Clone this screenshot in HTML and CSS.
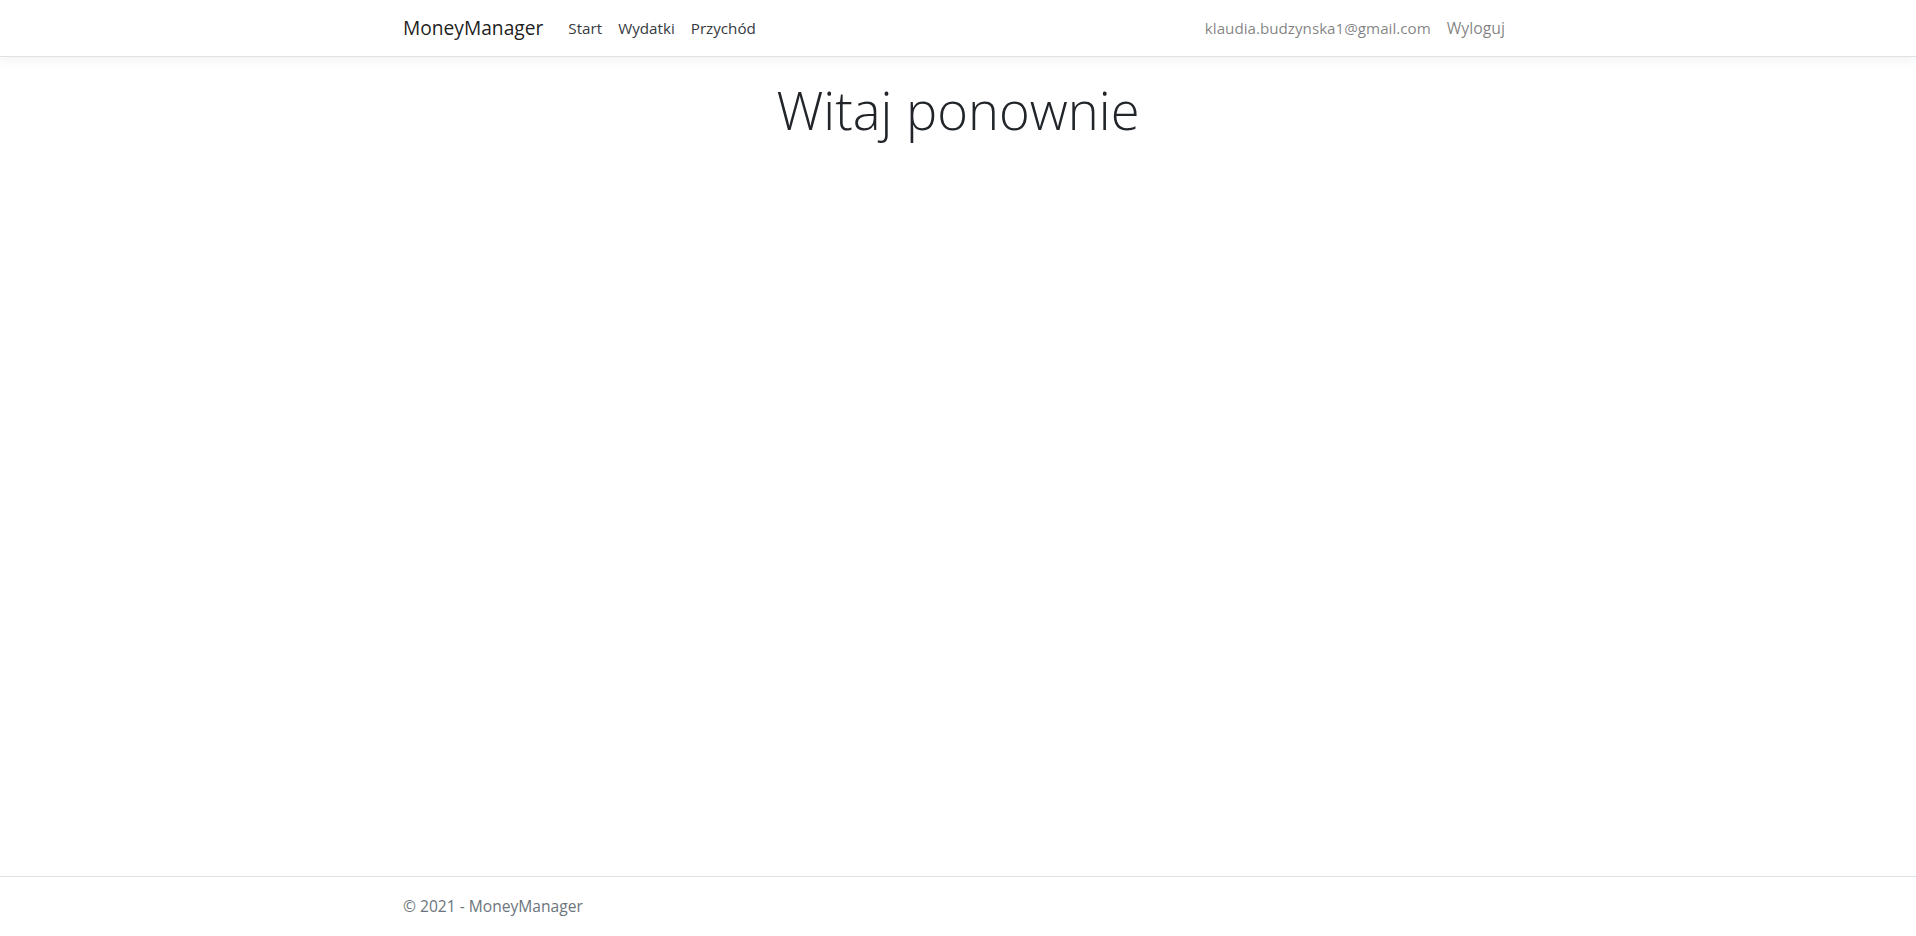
FILE: index.html
```html
<!DOCTYPE html>
<html lang="pl">
<head>
<meta charset="utf-8">
<title>MoneyManager</title>
<link rel="stylesheet" href="styles.css">
</head>
<body>
<header class="navbar">
  <div class="container nav-inner">
    <a class="brand" href="#">MoneyManager</a>
    <ul class="nav-main">
      <li><a class="nav-link dark" href="#">Start</a></li>
      <li><a class="nav-link dark" href="#">Wydatki</a></li>
      <li><a class="nav-link dark" href="#">Przychód</a></li>
    </ul>
    <ul class="nav-user">
      <li><a class="nav-link muted" href="#">klaudia.budzynska1@gmail.com</a></li>
      <li><a class="nav-link muted logout" href="#">Wyloguj</a></li>
    </ul>
  </div>
</header>
<main class="container main">
  <h1 class="display">Witaj ponownie</h1>
</main>
<footer class="footer">
  <div class="container">© 2021 - MoneyManager</div>
</footer>
</body>
</html>
```
FILE: styles.css
```css
* { box-sizing: border-box; }
html, body { margin: 0; padding: 0; }
body {
  font-family: "Open Sans", "Noto Sans", "Liberation Sans", sans-serif;
  font-size: 16px;
  line-height: 1.5;
  color: #212529;
  background: #fff;
  min-height: 100vh;
  display: flex;
  flex-direction: column;
}
a { text-decoration: none; }
.container {
  width: 1140px;
  margin: 0 auto;
  padding: 0 15px;
}
.navbar {
  background: #fff;
  border-bottom: 1px solid #dee2e6;
  box-shadow: 0 4px 12px rgba(0,0,0,.05);
  padding: 8px 0;
  margin-bottom: 16px;
}
.nav-inner {
  display: flex;
  align-items: center;
  height: 40px;
}
.brand {
  font-size: 19.2px;
  line-height: 30px;
  padding: 5px 0;
  margin-right: 17px;
  color: rgba(0,0,0,.9);
}
.nav-main, .nav-user {
  list-style: none;
  margin: 0;
  padding: 0;
  display: flex;
}
.nav-main { flex: 1; }
.nav-link {
  display: block;
  padding: 8px 8px;
  font-size: 15.2px;
  line-height: 24px;
}
.nav-user .nav-link { font-size: 15.2px; }
.nav-user .logout { font-size: 15.8px; }
.dark { color: #343a40; }
.muted { color: rgba(0,0,0,.5); }
.main {
  flex: 1;
  padding-bottom: 16px;
}
.display {
  margin: 5px 0 0;
  text-align: center;
  font-size: 52.5px;
  font-weight: 300;
  line-height: 1.2;
  color: #212529;
}
.footer {
  border-top: 1px solid #dee2e6;
  line-height: 59px;
  color: #6c757d;
  font-size: 15.6px;
  white-space: nowrap;
}
```
